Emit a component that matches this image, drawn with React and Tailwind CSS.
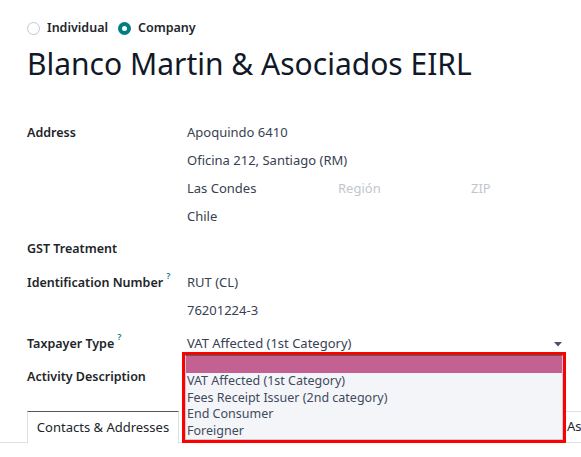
import React from "react";

const Label = ({ children, help }) => (
  <div className="w-[160px] shrink-0 h-[28px] flex items-center font-semibold text-[12.5px] text-[#212529]">
    <span>{children}</span>
    {help && <sup className="text-[9px] text-[#017e84] ml-[3px] -mt-[6px] font-semibold">?</sup>}
  </div>
);

const Line = ({ children, className = "" }) => (
  <div className={"h-[28px] flex items-center text-[#374151] " + className}>{children}</div>
);

export default function App() {
  return (
    <div
      className="w-[581px] h-[457px] bg-white relative overflow-hidden text-[13px]"
      style={{ fontFamily: '"Noto Sans", "DejaVu Sans", sans-serif' }}
    >
      <div className="pl-[27px] pt-[18px]">
        {/* radios */}
        <div className="h-[20px] flex items-center gap-[7px] font-semibold text-[12.5px] text-[#212529]">
          <span className="w-[13px] h-[13px] rounded-full border border-[#c4c7cc] bg-white"></span>
          <span>Individual</span>
          <span className="ml-[3px] w-[13px] h-[13px] rounded-full bg-[#017e84] flex items-center justify-center">
            <span className="w-[5px] h-[5px] rounded-full bg-white"></span>
          </span>
          <span>Company</span>
        </div>
        {/* title */}
        <div className="mt-[4px] h-[44px] flex items-center text-[30px] text-[#111827] leading-none">
          Blanco Martin &amp; Asociados EIRL
        </div>

        {/* Address */}
        <div className="mt-[33px] flex">
          <Label>Address</Label>
          <div className="flex flex-col">
            <Line>Apoquindo 6410</Line>
            <Line>Oficina 212, Santiago (RM)</Line>
            <Line>
              <span className="w-[151px]">Las Condes</span>
              <span className="w-[133px] text-[#c2c6cc]">Región</span>
              <span className="text-[#c2c6cc]">ZIP</span>
            </Line>
            <Line>Chile</Line>
          </div>
        </div>

        {/* GST */}
        <div className="mt-[4px] flex">
          <Label>GST Treatment</Label>
        </div>

        {/* Identification */}
        <div className="mt-[6px] flex">
          <Label help>Identification Number</Label>
          <div className="flex flex-col">
            <Line>RUT (CL)</Line>
            <Line>76201224-3</Line>
          </div>
        </div>

        {/* Taxpayer */}
        <div className="mt-[5px] flex">
          <Label help>Taxpayer Type</Label>
          <div className="w-[379px] h-[28px] flex items-center justify-between text-[#374151]">
            <span>VAT Affected (1st Category)</span>
            <svg width="8" height="5" viewBox="0 0 8 5" className="mr-[4px]">
              <path d="M0 0 L8 0 L4 4.5 Z" fill="#4b5563" />
            </svg>
          </div>
        </div>

        {/* Activity */}
        <div className="mt-[5px] flex">
          <Label>Activity Description</Label>
        </div>
      </div>

      {/* tabs */}
      <div className="mt-[20px] flex h-[32px] border-b border-[#dee2e6]">
        <div className="w-[27px] shrink-0"></div>
        <div className="w-[152px] shrink-0 h-[33px] border border-[#dee2e6] border-t-[#5f5060] border-b-white bg-white flex items-center justify-center text-[#212529]">
          Contacts &amp; Addresses
        </div>
        <div className="w-[124px] shrink-0 border-r border-[#dee2e6] mb-[-1px] mt-[28px]"></div>
        <div className="w-[92px] shrink-0 border-r border-[#dee2e6] mb-[-1px] mt-[28px]"></div>
        <div className="w-[109px] shrink-0 border-r border-[#dee2e6] mb-[-1px] mt-[28px]"></div>
        <div className="w-[62px] shrink-0"></div>
        <div className="flex-1 border-t border-[#dee2e6] flex items-center pl-[1px] whitespace-nowrap overflow-hidden text-[#212529]">
          Ass
        </div>
      </div>

      {/* dropdown overlay */}
      <div className="absolute left-[182px] top-[352px] w-[384px] h-[91px] border-[3px] border-[#ff0000] bg-[#f4f5f9]">
        <div className="h-full border border-[#c9ccd3] border-t-[#2f6f6b]">
          <div className="h-[17px] bg-[#c46193]"></div>
          <div className="pl-[1px] text-[12.5px] text-[#3f4a5c] leading-[16.5px]">
            <div>VAT Affected (1st Category)</div>
            <div>Fees Receipt Issuer (2nd category)</div>
            <div>End Consumer</div>
            <div>Foreigner</div>
          </div>
        </div>
      </div>
    </div>
  );
}
